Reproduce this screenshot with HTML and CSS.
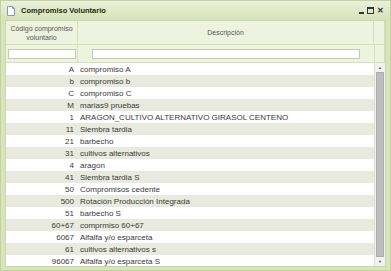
FILE: index.html
```html
<!DOCTYPE HTML>
<html lang="es">
  <head>
    <meta charset="UTF-8">
    <title>Compromiso Voluntario</title>
    <link rel="stylesheet" href="styles.css">
  </head>
  <body>
    <div class="window">
      <!-- Barra de titulo -->
      <div class="titlebar">
        <svg class="title-icon" width="8" height="10" viewBox="0 0 8 10">
          <path d="M0.5 0.5h5l2 2v7h-7z" fill="#ffffff" stroke="#7d9bc4"/>
          <path d="M5.5 0.5v2h2" fill="none" stroke="#7d9bc4"/>
        </svg>
        <span class="title-text">Compromiso Voluntario</span>
        <div class="title-tools">
          <span class="tool-min"></span>
          <span class="tool-max"></span>
          <span class="tool-close">&#x2715;</span>
        </div>
      </div>
      <div class="panel">
        <div class="grid-head">
          <div class="col-code"><span>Código compromiso<br>voluntario</span></div>
          <div class="col-desc">Descripción</div>
          <div class="col-scroll"></div>
        </div>
        <div class="grid-filter">
          <div class="col-code"><input type="text" class="filter-input"></div>
          <div class="col-desc"><input type="text" class="filter-input filter-wide"></div>
          <div class="col-scroll"></div>
        </div>
        <div class="grid-body">
          <div class="rows" id="rows"></div>
          <div class="scrollbar">
            <span class="arrow">&#9650;</span>
            <span class="thumb"></span>
            <span class="arrow">&#9660;</span>
          </div>
        </div>
      </div>
    </div>
    <script>
      const data = [
        ['A', 'compromiso A'],
        ['b', 'compromiso b'],
        ['C', 'compromiso C'],
        ['M', 'marias9 pruebas'],
        ['1', 'ARAGON_CULTIVO ALTERNATIVO GIRASOL CENTENO'],
        ['11', 'Siembra tardia'],
        ['21', 'barbecho'],
        ['31', 'cultivos alternativos'],
        ['4', 'aragon'],
        ['41', 'Siembra tardia S'],
        ['50', 'Compromisos cedente'],
        ['500', 'Rotación Producción Integrada'],
        ['51', 'barbecho S'],
        ['60+67', 'comprmiso 60+67'],
        ['6067', 'Alfalfa y/o esparceta'],
        ['61', 'cultivos alternativos s'],
        ['96067', 'Alfalfa y/o esparceta S']
      ];
      const rows = document.getElementById('rows');
      data.forEach(([code, desc]) => {
        const row = document.createElement('div');
        row.className = 'row';
        row.innerHTML = `<span class="cell-code">${code}</span><span class="cell-desc">${desc}</span>`;
        rows.appendChild(row);
      });
    </script>
  </body>
</html>
```

FILE: styles.css
```css
html,
body {
  margin: 0;
  padding: 0;
}

body {
  font-family: "Liberation Sans", Arial, sans-serif;
  font-size: 8px;
  color: #3a3a3a;
  background: #ffffff;
}

/* Ventana */
.window {
  width: 391px;
  height: 271px;
  box-sizing: border-box;
  background: #d8e4bb;
  border: 1px solid #c3d39d;
  display: flex;
  flex-direction: column;
  padding: 0 4px 3px 4px;
}

.titlebar {
  height: 19px;
  display: flex;
  align-items: center;
  margin: 0 -4px;
  padding: 0 6px;
  background: linear-gradient(#eaf0da, #d6e2b8);
}

.title-icon {
  margin-right: 6px;
}

.title-text {
  font-weight: bold;
  font-size: 7.5px;
  color: #1f2b10;
}

.title-tools {
  margin-left: auto;
  display: flex;
  align-items: center;
  gap: 3px;
}

.tool-min {
  width: 5px;
  height: 2px;
  background: #333;
  margin-top: 5px;
}

.tool-max {
  width: 5px;
  height: 4px;
  border: 1px solid #333;
  border-top-width: 2px;
}

.tool-close {
  font-size: 8px;
  font-weight: bold;
  color: #333;
}

/* Panel con la tabla */
.panel {
  flex: 1;
  display: flex;
  flex-direction: column;
  background: #ffffff;
  border: 1px solid #c9d6a9;
  min-height: 0;
}

.grid-head,
.grid-filter {
  display: flex;
  background: #eef3df;
  border-bottom: 1px solid #d5e0bb;
}

.grid-head {
  height: 23px;
  color: #555;
  font-size: 7px;
}

.grid-head > div {
  display: flex;
  align-items: center;
  justify-content: center;
  text-align: center;
  white-space: nowrap;
  border-right: 1px solid #d5e0bb;
  line-height: 9px;
}

.col-code {
  width: 72px;
  flex: none;
  box-sizing: border-box;
}

.col-desc {
  flex: 1;
}

.col-scroll {
  width: 10px;
  flex: none;
}

.grid-filter {
  height: 17px;
  align-items: center;
}

.grid-filter > div {
  height: 100%;
  display: flex;
  align-items: center;
  border-right: 1px solid #d5e0bb;
  box-sizing: border-box;
}

.filter-input {
  box-sizing: border-box;
  width: 68px;
  height: 10px;
  margin: 0 0 0 2px;
  padding: 0;
  border: 1px solid #c4cbb8;
  background: #ffffff;
}

.filter-wide {
  width: 268px;
  margin-left: 14px;
}

/* Filas */
.grid-body {
  flex: 1;
  display: flex;
  min-height: 0;
}

.rows {
  flex: 1;
}

.row {
  display: flex;
  height: 12px;
  align-items: center;
}

.row:nth-child(even) {
  background: #e8eadf;
}

.cell-code {
  width: 68px;
  flex: none;
  text-align: right;
}

.cell-desc {
  padding-left: 6px;
  white-space: nowrap;
}

.scrollbar {
  width: 10px;
  display: flex;
  flex-direction: column;
  background: #f2f2f2;
  border-left: 1px solid #dcdcdc;
}

.arrow {
  height: 9px;
  font-size: 4px;
  color: #555;
  display: flex;
  align-items: center;
  justify-content: center;
}

.thumb {
  flex: 1;
  margin: 0 1px;
  background: #bdbdbd;
  border: 1px solid #adadad;
}
```
